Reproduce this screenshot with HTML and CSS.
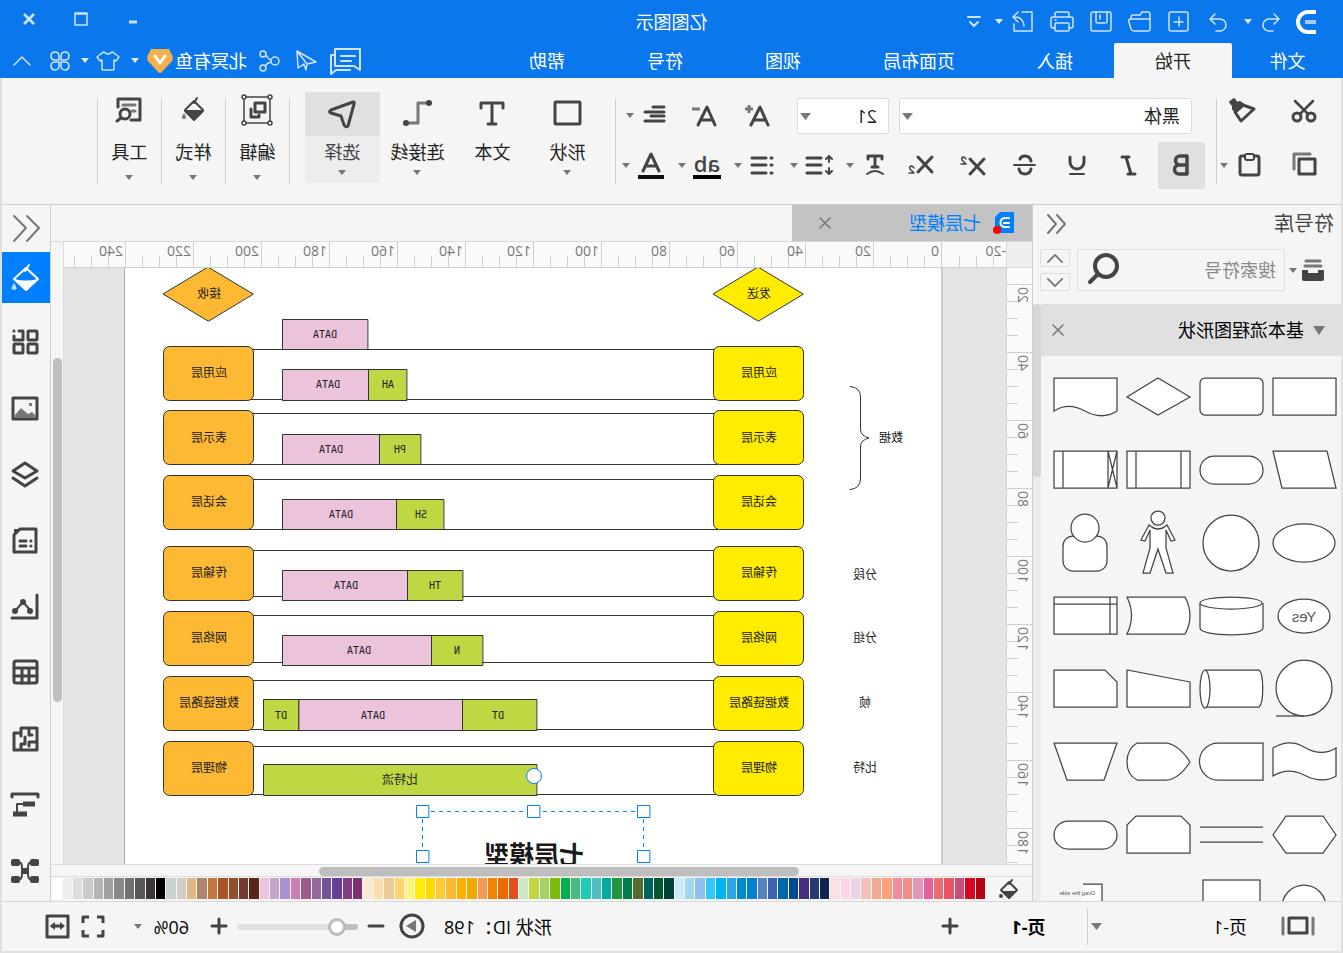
FILE: index.html
```html
<!DOCTYPE html>
<html lang="zh-CN">
<head>
<meta charset="utf-8">
<title>亿图图示</title>
<link rel="stylesheet" href="styles.css">
</head>
<body>
<div class="app">
  <header class="titlebar">
    <div class="quick">
      <svg class="logo" viewBox="0 0 24 26"><path d="M2 3H10A10 10 0 0 1 10 23H2" stroke="#fff" stroke-width="4" fill="none"/><path d="M2 13H13" stroke="#a9cdf8" stroke-width="4"/></svg>
      <button class="q-redo" aria-label="重做"><svg viewBox="0 0 24 24"><path d="M4 9H14A6 6 0 0 1 14 21H10M9 4L4 9L9 14"/></svg></button>
      <button class="q-caret" aria-label="更多"><svg class="caret" viewBox="0 0 8 5"><path d="M0 0H8L4 5Z"/></svg></button>
      <button class="q-btn" aria-label="撤销"><svg viewBox="0 0 24 24"><path d="M20 9H10A6 6 0 0 0 10 21H14M15 4L20 9L15 14"/></svg></button>
      <button class="q-btn" aria-label="新建"><svg viewBox="0 0 24 24"><rect x="3" y="2" width="19" height="19" rx="2"/><path d="M12 7V16M8 12H17"/></svg></button>
      <button class="q-btn" aria-label="打开"><svg viewBox="0 0 24 24"><path d="M2 19V5Q2 2 4 2H10L12 5H19Q21 5 21 8V9M4 9H21Q24 9 23 12L21 19Q20 21 18 21H4Q2 21 2 19V11Q2 9 4 9Z"/></svg></button>
      <button class="q-btn" aria-label="保存"><svg viewBox="0 0 24 24"><rect x="2" y="2" width="20" height="19" rx="2"/><path d="M6 2V12Q6 13 8 13H15Q17 13 17 12V2M13 5V9"/></svg></button>
      <button class="q-btn" aria-label="打印"><svg viewBox="0 0 24 24"><path d="M5 7V4Q5 2 7 2H17Q19 2 19 4V7M5 18H3Q1 18 1 16V9Q1 7 3 7H21Q23 7 23 9V16Q23 18 21 18H19M18 10H19"/><rect x="5" y="13" width="14" height="8" rx="1"/></svg></button>
      <button class="q-btn" aria-label="导出"><svg viewBox="0 0 24 24"><path d="M13 2H3V21H21V14M22 7Q12 6 11 16M17 2L22 7L17 12"/></svg></button>
      <button class="q-narrow" aria-label="更多导出"><svg class="caret" viewBox="0 0 8 5"><path d="M0 0H8L4 5Z"/></svg></button>
      <button class="q-btn" aria-label="自定义"><svg viewBox="0 0 24 24"><path d="M6 7H18M8 12L12 16L16 12" stroke-width="2"/></svg></button>
    </div>
    <div class="title">亿图图示</div>
    <div class="window-buttons">
      <button aria-label="最小化"><svg viewBox="0 0 24 24"><path d="M8 15H16" stroke-width="3" stroke-linecap="butt"/></svg></button>
      <button aria-label="最大化"><svg viewBox="0 0 24 24"><path d="M6 6H18V18H6ZM6 7H18"/></svg></button>
      <button aria-label="关闭"><svg viewBox="0 0 24 24"><path d="M7 7L17 17M17 7L7 17" stroke-width="2.500" stroke-linecap="butt"/></svg></button>
    </div>
  </header>

  <nav class="menubar">
    <button class="menu file">文件</button>
    <button class="menu active">开始</button>
    <button class="menu">插入</button>
    <button class="menu">页面布局</button>
    <button class="menu">视图</button>
    <button class="menu">符号</button>
    <button class="menu">帮助</button>
    <div class="account">
      <button class="w40" aria-label="评论"><svg class="s32" viewBox="0 0 32 32"><path d="M2 4H27V21H8L2 25ZM27 10H31V29L26 25H12M7 11H21M11 16H21" stroke-width="2"/></svg></button>
      <button class="w39" aria-label="发送"><svg viewBox="0 0 24 24"><path d="M21 2L2 13L11 15L12 21L14 15L20 19ZM21 2L11 15"/></svg></button>
      <button class="w36" aria-label="分享"><svg viewBox="0 0 24 24"><circle cx="6" cy="12" r="4"/><circle cx="18" cy="5" r="3"/><circle cx="18" cy="19" r="3"/><path d="M10 11Q13 10 15 6M10 13Q14 14 16 17"/></svg></button>
      <a class="user" href="#">北冥有鱼</a>
      <button class="w28" aria-label="会员"><svg class="vip" viewBox="0 0 28 26"><path d="M5 1H23L27 9L26 13L15 25H13L2 13L1 9Z" fill="#f3b04b" stroke="none"/><path d="M9 8L14 15L19 8" stroke="#fff" stroke-width="3"/></svg></button>
      <button class="w22" aria-label="会员菜单"><svg class="caret" viewBox="0 0 8 5"><path d="M0 0H8L4 5Z"/></svg></button>
      <button class="w32" aria-label="主题"><svg viewBox="0 0 24 24"><path d="M8 3Q12 7 16 3L18 4L23 8L20 12L18 11V20Q18 21 17 21H7Q6 21 6 20V11L4 12L1 8L6 4Z"/></svg></button>
      <button class="w14" aria-label="主题菜单"><svg class="caret" viewBox="0 0 8 5"><path d="M0 0H8L4 5Z"/></svg></button>
      <button class="w36" aria-label="应用"><svg viewBox="0 0 24 24"><path d="M11 11H6.500A4 4 0 1 1 11 6.500ZM13 11V6.500A4 4 0 1 1 17.500 11ZM11 13V17.500A4 4 0 1 1 6.500 13ZM13 13H17.500A4 4 0 1 1 13 17.500Z"/></svg></button>
      <button class="w40" aria-label="收起功能区"><svg viewBox="0 0 24 24"><path d="M4 16L12 8L20 16"/></svg></button>
    </div>
  </nav>

  <div class="frame">
    <section class="ribbon">
      <div class="clip-group">
        <div class="row clip-top">
          <button class="w40" aria-label="剪切"><svg class="s28" viewBox="0 0 28 28"><circle cx="7" cy="20" r="4" stroke-width="3"/><circle cx="21" cy="20" r="4" stroke-width="3"/><path d="M5 4L18 17M23 4L10 17" stroke-width="2.500"/></svg></button>
          <button class="w40" aria-label="格式刷"><svg class="s28" viewBox="0 0 28 28"><path d="M3 12L14 8L22 15L16 24Z" stroke-width="3"/><path d="M13 8L17 5L20 6L23 2L27 5L24 9L24 12L21 15Z" fill="#444"/></svg></button>
        </div>
        <div class="row clip-bottom">
          <button class="w40" aria-label="复制"><svg class="s28" viewBox="0 0 28 28"><path d="M24 18V3H8" stroke="#777" stroke-width="3"/><rect x="3" y="8" width="16" height="15" stroke-width="3"/></svg></button>
          <button class="w40" aria-label="粘贴"><svg class="s28" viewBox="0 0 28 28"><rect x="4" y="5" width="19" height="19" rx="2" stroke-width="3"/><rect x="9" y="3" width="9" height="6" rx="2" fill="#f5f5f5"/></svg></button>
          <button class="w10" aria-label="粘贴选项"><svg class="caret" viewBox="0 0 8 5"><path d="M0 0H8L4 5Z"/></svg></button>
        </div>
      </div>
      <span class="divider"></span>
      <div class="font-group">
        <div class="row font-top">
          <label class="combo family"><select aria-label="字体"><option>黑体</option></select><svg class="caret big" viewBox="0 0 8 5"><path d="M0 0H8L4 5Z"/></svg></label>
          <label class="combo size"><select aria-label="字号"><option>21</option></select><svg class="caret big" viewBox="0 0 8 5"><path d="M0 0H8L4 5Z"/></svg></label>
          <button class="w53" aria-label="增大字号"><svg class="s28" viewBox="0 0 28 28"><path d="M3 24L11 6L20 24M6 19H17" stroke-width="3"/><path d="M18 8H26M22 4V12" stroke="#777" stroke-width="3" stroke-linecap="butt"/></svg></button>
          <button class="w53" aria-label="减小字号"><svg class="s28" viewBox="0 0 28 28"><path d="M3 24L11 6L20 24M6 19H17" stroke-width="3"/><path d="M18 8H26" stroke="#777" stroke-width="3" stroke-linecap="butt"/></svg></button>
          <button class="unit first" aria-label="对齐"><svg class="s28" viewBox="0 0 28 28"><path d="M5 6H16M5 11H24M5 15H18M5 20H24" stroke-width="3"/></svg><svg class="caret" viewBox="0 0 8 5"><path d="M0 0H8L4 5Z"/></svg></button>
        </div>
        <div class="row font-bottom">
          <button class="bold" aria-label="加粗"><svg class="s28" viewBox="0 0 28 28"><path d="M8 5H15A4.500 4.500 0 0 1 15 14H8M15 14H16A4.500 4.500 0 0 1 16 23H8V5" stroke-width="3.500"/></svg></button>
          <button class="w52" aria-label="斜体"><svg class="s28" viewBox="0 0 28 28"><path d="M14 6H21M8 23H15M17 6L12 23" stroke-width="3"/></svg></button>
          <button class="w52" aria-label="下划线"><svg class="s28" viewBox="0 0 28 28"><path d="M7 6V11A7 7 0 0 0 21 11V6" stroke-width="3"/><path d="M7 23H21" stroke-width="2"/></svg></button>
          <button class="w52" aria-label="删除线"><svg class="s28" viewBox="0 0 28 28"><path d="M19 8Q18 5 14 5Q9 5 8 10M8 18Q9 23 14 23Q19 23 20 18" stroke-width="3"/><path d="M4 14H25" stroke-width="2"/></svg></button>
          <button class="w52" aria-label="上标"><svg class="s28" viewBox="0 0 28 28"><path d="M3 8L17 23M17 8L3 23" stroke-width="3"/><path d="M21 8Q22 6 24 6Q26 7 25 9L21 13H26" stroke-width="1.500"/></svg></button>
          <button class="w52" aria-label="下标"><svg class="s28" viewBox="0 0 28 28"><path d="M3 6L17 21M17 6L3 21" stroke-width="3"/><path d="M21 17Q22 15 24 15Q26 16 25 18L21 22H26" stroke-width="1.500"/></svg></button>
          <button class="unit text-style" aria-label="文本样式"><svg class="s28" viewBox="0 0 28 28"><path d="M7 8V5H21V8M14 5V16M11 16H17" stroke-width="3"/><path d="M6 23Q14 17 22 23" stroke-width="2"/></svg><svg class="caret" viewBox="0 0 8 5"><path d="M0 0H8L4 5Z"/></svg></button>
          <button class="unit" aria-label="行距"><svg class="s28" viewBox="0 0 28 28"><path d="M12 7H26M12 14H26M12 22H26" stroke-width="3"/><path d="M4 11V5M1 8L4 5L7 8M4 17V23M1 20L4 23L7 20" stroke-width="2"/></svg><svg class="caret" viewBox="0 0 8 5"><path d="M0 0H8L4 5Z"/></svg></button>
          <button class="unit" aria-label="列表"><svg class="s28" viewBox="0 0 28 28"><path d="M11 7H25M11 14H25M11 22H25M5 7H6M5 14H6M5 22H6" stroke-width="3"/></svg><svg class="caret" viewBox="0 0 8 5"><path d="M0 0H8L4 5Z"/></svg></button>
          <button class="unit" aria-label="突出显示"><span class="mark">ab</span><svg class="caret" viewBox="0 0 8 5"><path d="M0 0H8L4 5Z"/></svg></button>
          <button class="unit" aria-label="字体颜色"><svg class="s28" viewBox="0 0 28 28"><path d="M6 20L14 3L22 20M9 15H19" stroke-width="3"/><path d="M1 26H27" stroke="#111" stroke-width="4" stroke-linecap="butt"/></svg><svg class="caret" viewBox="0 0 8 5"><path d="M0 0H8L4 5Z"/></svg></button>
        </div>
      </div>
      <span class="divider"></span>
      <div class="tools">
        <button class="tool"><span class="pic"><svg class="s32" viewBox="0 0 32 32"><rect x="3" y="4" width="25" height="22" rx="1" stroke-width="3"/></svg></span><span class="lbl">形状</span><svg class="caret" viewBox="0 0 8 5"><path d="M0 0H8L4 5Z"/></svg></button>
        <button class="tool"><span class="pic"><svg class="s32" viewBox="0 0 32 32"><path d="M5 10V5H27V10M16 5V26M12 26H20" stroke-width="3"/></svg></span><span class="lbl">文本</span></button>
        <button class="tool"><span class="pic"><svg class="s32" viewBox="0 0 32 32"><path d="M6 5H15V25H24" stroke="#777" stroke-width="3"/><circle cx="4" cy="5" r="3" fill="#444" stroke="none"/><circle cx="27" cy="25" r="3" fill="#444" stroke="none"/></svg></span><span class="lbl">连接线</span><svg class="caret" viewBox="0 0 8 5"><path d="M0 0H8L4 5Z"/></svg></button>
        <button class="tool selected"><span class="pic"><svg class="s32" viewBox="0 0 32 32"><path d="M5 4L27 12Q30 14 27 15L17 18L14 27Q12 30 10 28L4 6Q3 4 5 4Z" stroke-width="3"/></svg></span><span class="lbl">选择</span><svg class="caret" viewBox="0 0 8 5"><path d="M0 0H8L4 5Z"/></svg></button>
      </div>
      <span class="divider wide"></span>
      <button class="tool slim"><span class="pic"><svg class="s32" viewBox="0 0 32 32"><path d="M3 3H29V29H3Z" stroke-width="1.500"/><rect x="8" y="9" width="10" height="9" stroke-width="3"/><path d="M22 15V23H14V21" stroke-width="3"/><g fill="#f5f5f5" stroke-width="1.500"><circle cx="3" cy="3" r="2"/><circle cx="29" cy="3" r="2"/><circle cx="3" cy="29" r="2"/><circle cx="29" cy="29" r="2"/></g></svg></span><span class="lbl">编辑</span><svg class="caret" viewBox="0 0 8 5"><path d="M0 0H8L4 5Z"/></svg></button>
      <span class="divider"></span>
      <button class="tool slim"><span class="pic"><svg class="s32" viewBox="0 0 32 32"><path d="M12 4L15 9M15 7L6 16L15 25L24 16Z" stroke-width="2"/><path d="M6 17H24L15 26Z" fill="#444"/><path d="M25 19Q29 25 25 25T25 19Z" fill="#777" stroke="none"/></svg></span><span class="lbl">样式</span><svg class="caret" viewBox="0 0 8 5"><path d="M0 0H8L4 5Z"/></svg></button>
      <span class="divider"></span>
      <button class="tool slim"><span class="pic"><svg class="s32" viewBox="0 0 32 32"><path d="M27 13V5H5V26H14" stroke-width="3"/><path d="M10 11H22M10 17H13" stroke="#777" stroke-width="3"/><circle cx="20" cy="20" r="5" stroke-width="3"/><path d="M24 24L28 27" stroke-width="3"/></svg></span><span class="lbl">工具</span><svg class="caret" viewBox="0 0 8 5"><path d="M0 0H8L4 5Z"/></svg></button>
      <span class="divider"></span>
    </section>

    <main class="workspace">
      <aside class="library">
        <div class="lib-head"><h2>符号库</h2><button aria-label="折叠符号库"><svg viewBox="0 0 24 24"><path d="M12 3L4 12L12 21M21 3L13 12L21 21" stroke="#777" stroke-width="2"/></svg></button></div>
        <div class="lib-search">
          <button class="archive" aria-label="库管理"><svg viewBox="0 0 24 24"><path d="M5 3H19M4 8H20" stroke="#777" stroke-width="3"/><path d="M1 12H7V15H17V12H23V21Q23 23 21 23H3Q1 23 1 21Z" fill="#444" stroke="none"/></svg><svg class="caret" viewBox="0 0 8 5"><path d="M0 0H8L4 5Z"/></svg></button>
          <div class="search-box"><input type="text" placeholder="搜索符号" aria-label="搜索符号"><button aria-label="搜索"><svg class="s36" viewBox="0 0 36 36"><circle cx="16" cy="14" r="11" stroke-width="4"/><path d="M24 22L32 30" stroke-width="4"/></svg></button></div>
          <div class="steps"><button aria-label="上一个"><svg class="step" viewBox="0 0 18 10"><path d="M1 9L9 1L17 9"/></svg></button><button aria-label="下一个"><svg class="step" viewBox="0 0 18 10"><path d="M1 1L9 9L17 1"/></svg></button></div>
        </div>
        <div class="lib-body">
          <div class="lib-scroll">
            <div class="section-head"><svg class="tri" viewBox="0 0 12 9"><path d="M0 0H12L6 9Z"/></svg><h3>基本流程图形状</h3><button aria-label="关闭"><svg class="s12" viewBox="0 0 12 12"><path d="M1 1L11 11M11 1L1 11"/></svg></button></div>
            <div class="shapes">
              <svg viewBox="0 0 73 73"><path d="M5 18H68V55H5Z"/></svg>
              <svg viewBox="0 0 73 73"><rect x="5" y="18" width="63" height="37" rx="5"/></svg>
              <svg viewBox="0 0 73 73"><path d="M5 37L37 18L68 37L37 55Z"/></svg>
              <svg viewBox="0 0 73 73"><path d="M5 18H68V51C57 44 46 46 37 51S16 58 5 51Z"/></svg>
              <svg viewBox="0 0 73 73"><path d="M14 18H68L59 55H5Z"/></svg>
              <svg viewBox="0 0 73 73"><rect x="5" y="23" width="63" height="28" rx="14"/></svg>
              <svg viewBox="0 0 73 73"><path d="M5 18H68V55H5ZM14 18V55M59 18V55"/></svg>
              <svg viewBox="0 0 73 73"><path d="M5 18H68V55H5ZM14 18V55M59 18V55M5 18L14 55M14 18L5 55"/></svg>
              <svg viewBox="0 0 73 73"><ellipse cx="37" cy="37" rx="31" ry="19"/></svg>
              <svg viewBox="0 0 73 73"><circle cx="37" cy="37" r="28"/></svg>
              <svg viewBox="0 0 73 73"><circle cx="37" cy="12" r="7"/><path d="M28 19Q37 27 46 19L54 34L50 35L45 24V42L52 67H45L37 43L29 67H22L29 42V24L24 35L20 34Z"/></svg>
              <svg viewBox="0 0 73 73"><rect x="15" y="30" width="44" height="35" rx="10"/><circle cx="37" cy="22" r="14"/></svg>
              <svg viewBox="0 0 73 73"><ellipse cx="37" cy="37" rx="26" ry="17"/><text x="37" y="43" class="yes">Yes</text></svg>
              <svg viewBox="0 0 73 73"><path d="M5 24V49C5 58 68 58 68 49V24"/><ellipse cx="37" cy="24" rx="31" ry="6"/></svg>
              <svg viewBox="0 0 73 73"><path d="M10 18H68Q59 37 68 55H10Q0 37 10 18Z"/></svg>
              <svg viewBox="0 0 73 73"><path d="M5 18H68V55H5ZM12 18V55M5 25H68"/></svg>
              <svg viewBox="0 0 73 73"><circle cx="37" cy="36" r="28"/><path d="M37 64H65"/></svg>
              <svg viewBox="0 0 73 73"><path d="M63 18H9C4 22 4 51 9 55H63"/><ellipse cx="63" cy="37" rx="5" ry="19"/></svg>
              <svg viewBox="0 0 73 73"><path d="M5 30L68 18V55H5Z"/></svg>
              <svg viewBox="0 0 73 73"><path d="M17 18H68V55H5V30Z"/></svg>
              <svg viewBox="0 0 73 73"><path d="M5 23C16 30 27 28 37 22S58 17 68 23V51C58 45 47 45 37 50S16 58 5 51Z"/></svg>
              <svg viewBox="0 0 73 73"><path d="M5 18H50A18 18 0 0 1 50 55H5Z"/></svg>
              <svg viewBox="0 0 73 73"><path d="M5 37Q16 20 28 18H58Q68 24 68 37T58 55H28Q16 54 5 37Z"/></svg>
              <svg viewBox="0 0 73 73"><path d="M5 18H68L55 55H18Z"/></svg>
              <svg viewBox="0 0 73 73"><path d="M5 37L18 18H55L68 37L55 55H18Z"/></svg>
              <svg viewBox="0 0 73 73"><path d="M5 29H68M5 44H68"/></svg>
              <svg viewBox="0 0 73 73"><path d="M14 18H59L68 27V55H5V27Z"/></svg>
              <svg viewBox="0 0 73 73"><rect x="5" y="23" width="63" height="28" rx="14"/></svg>
              <svg viewBox="0 0 73 73"><circle cx="37" cy="36" r="22"/></svg>
              <svg viewBox="0 0 73 73"><rect x="8" y="9" width="57" height="57"/></svg>
              <svg viewBox="0 0 73 73"></svg>
              <svg viewBox="0 0 73 73"><path d="M39 13H20V60H39"/><text x="27" y="24" class="tiny">Drag the side</text></svg>
            </div>
          </div>
          <div class="lib-track"><span class="lib-thumb"></span></div>
        </div>
      </aside>

      <section class="center">
        <div class="doc-tabs">
          <div class="doc-tab">
            <svg class="doc-icon" viewBox="0 0 22 24"><path d="M1 1H15L20 6V22H1Z" fill="#007fff" stroke="none"/><path d="M6 7H10A4 4 0 0 1 10 16H6M6 12H11" stroke="#fff" stroke-width="2"/><circle cx="18" cy="19" r="4" fill="#f00" stroke="none"/></svg>
            <button class="doc-name">七层模型</button>
            <button class="doc-close" aria-label="关闭文档"><svg class="s12" viewBox="0 0 12 12"><path d="M1 1L11 11M11 1L1 11"/></svg></button>
          </div>
        </div>
        <div class="ruler-row">
          <div class="corner"></div>
          <div class="h-ruler"><span class="neg">-20</span><span>0</span><span>20</span><span>40</span><span>60</span><span>80</span><span>100</span><span>120</span><span>140</span><span>160</span><span>180</span><span>200</span><span>220</span><span>240</span></div>
          <div class="track-gap"></div>
        </div>
        <div class="canvas-row">
          <div class="v-ruler"><span>20</span><span>40</span><span>60</span><span>80</span><span>100</span><span>120</span><span>140</span><span>160</span><span>180</span></div>
          <div class="canvas">
            <svg class="diagram" viewBox="337 268 942 596">
              <rect x="401.500" y="200" width="817" height="900" class="page"/>
              <g class="flow">
                <path fill="none" d="M625 349.500H1095M625 399.500H1095M625 413.500H1095M625 464.500H1095M625 479.500H1095M625 529.500H1095M625 550.500H1095M625 596.500H1095M625 615.500H1095M625 662.500H1095M625 680.500H1095M625 729.500H1095M625 746.500H1095M625 794.500H1095"/>
                <g fill="#ffec00">
                  <path d="M540 294L585 267L630 294L585 321Z"/>
                  <rect x="539.500" y="346.500" width="90" height="54" rx="6"/><rect x="539.500" y="410.500" width="90" height="54" rx="6"/><rect x="539.500" y="475.500" width="90" height="54" rx="6"/><rect x="539.500" y="546.500" width="90" height="54" rx="6"/><rect x="539.500" y="611.500" width="90" height="54" rx="6"/><rect x="539.500" y="676.500" width="90" height="54" rx="6"/><rect x="539.500" y="741.500" width="90" height="54" rx="6"/>
                </g>
                <g fill="#fdb933">
                  <path d="M1090 294L1135 267L1180 294L1135 321Z"/>
                  <rect x="1089.500" y="346.500" width="90" height="54" rx="6"/><rect x="1089.500" y="410.500" width="90" height="54" rx="6"/><rect x="1089.500" y="475.500" width="90" height="54" rx="6"/><rect x="1089.500" y="546.500" width="90" height="54" rx="6"/><rect x="1089.500" y="611.500" width="90" height="54" rx="6"/><rect x="1089.500" y="676.500" width="90" height="54" rx="6"/><rect x="1089.500" y="741.500" width="90" height="54" rx="6"/>
                </g>
                <g fill="#ebc3db">
                  <rect x="975.500" y="319.500" width="85" height="30"/><rect x="974.500" y="369.500" width="86" height="31"/><rect x="963.500" y="434.500" width="97" height="30"/><rect x="946.500" y="499.500" width="114" height="30"/><rect x="935.500" y="570.500" width="125" height="30"/><rect x="911.500" y="635.500" width="149" height="30"/><rect x="880.500" y="699.500" width="164" height="31"/>
                </g>
                <g fill="#bed742">
                  <rect x="936.500" y="369.500" width="38" height="31"/><rect x="922.500" y="434.500" width="41" height="30"/><rect x="899.500" y="499.500" width="47" height="30"/><rect x="880.500" y="570.500" width="55" height="30"/><rect x="860.500" y="635.500" width="51" height="30"/><rect x="806.500" y="699.500" width="74" height="31"/><rect x="1044.500" y="699.500" width="35" height="31"/><rect x="806.500" y="764.500" width="273" height="31"/>
                </g>
                <path fill="none" d="M493 386.500Q482.500 387 482.500 397V430Q482 436 474 438Q482 440 482.500 446V479Q483 489 493 489.500"/>
              </g>
              <g class="node-text">
                <text x="584" y="298">发送</text><text x="584" y="377">应用层</text><text x="584" y="442">表示层</text><text x="584" y="506">会话层</text><text x="584" y="577">传输层</text><text x="584" y="642">网络层</text><text x="584" y="707">数据链路层</text><text x="584" y="772">物理层</text>
                <text x="1134" y="298">接收</text><text x="1134" y="377">应用层</text><text x="1134" y="442">表示层</text><text x="1134" y="506">会话层</text><text x="1134" y="577">传输层</text><text x="1134" y="642">网络层</text><text x="1134" y="707">数据链路层</text><text x="1134" y="772">物理层</text>
                <text x="452" y="442">数据</text><text x="478" y="579">分段</text><text x="478" y="642">分组</text><text x="478" y="707">帧</text><text x="478" y="772">比特</text><text x="943" y="784">比特流</text>
              </g>
              <g class="node-text latin">
                <text x="1018" y="338">DATA</text><text x="1015" y="388">DATA</text><text x="955" y="388">AH</text><text x="1012" y="453">DATA</text><text x="943" y="453">PH</text><text x="1002" y="518">DATA</text><text x="922" y="518">SH</text><text x="997" y="589">DATA</text><text x="908" y="589">TH</text><text x="984" y="654">DATA</text><text x="886" y="654">N</text><text x="970" y="719">DATA</text><text x="845" y="719">DT</text><text x="1062" y="719">DT</text>
              </g>
              <text x="809" y="864" class="big-title">七层模型</text>
              <path class="dash" d="M700 811.500H921M699.500 811V900M920.500 811V900"/>
              <g class="handles"><rect x="693.500" y="805.500" width="12" height="12"/><rect x="803.500" y="805.500" width="12" height="12"/><rect x="914.500" y="805.500" width="12" height="12"/><rect x="693.500" y="850.500" width="12" height="12"/><rect x="914.500" y="850.500" width="12" height="12"/><circle cx="809" cy="776" r="7.500"/></g>
            </svg>
          </div>
          <div class="v-track"><span class="v-thumb"></span></div>
        </div>
        <div class="h-track"><span class="h-thumb"></span></div>
        <div class="palette">
          <button class="fill" aria-label="填充颜色"><svg viewBox="0 0 24 24"><path d="M9 3L12 7M12 5L4 13L12 21L20 13Z" stroke-width="2"/><path d="M4 14H20L12 22Z" fill="#444" stroke="none"/><circle cx="20" cy="19" r="2" fill="#444" stroke="none"/></svg></button>
          <div class="swatches" id="swatches"></div>
        </div>
      </section>

      <aside class="side">
        <button class="collapse" aria-label="收起面板"><svg class="s32" viewBox="0 0 32 32"><path d="M15 3L3 15L15 28M28 3L16 15L28 28" stroke="#777" stroke-width="2"/></svg></button>
        <button class="on" aria-label="填充"><svg class="s32" viewBox="0 0 32 32"><path d="M13 3L17 9M16 6L4 17L16 28L28 17Z" stroke="#fff" stroke-width="2"/><path d="M4 17Q16 20 28 17L16 29Z" fill="#fff" stroke="none"/><path d="M28 21Q33 28 28 28T28 21Z" fill="#b8dcff" stroke="none"/></svg></button>
        <button class="gap" aria-label="组件"><svg class="s32" viewBox="0 0 32 32"><g stroke-width="3"><rect x="5" y="5" width="9" height="9" rx="1"/><rect x="5" y="18" width="9" height="9" rx="1"/><rect x="19" y="18" width="9" height="9" rx="1"/><path d="M23 5H19V14H28V10M28 5H28.100"/></g></svg></button>
        <button aria-label="图片"><svg class="s32" viewBox="0 0 32 32"><rect x="5" y="6" width="24" height="21" stroke-width="3"/><path d="M6 24L10 20L14 22L21 16L27 23V26H6Z" fill="#777" stroke="none"/><rect x="10" y="11" width="3" height="3" fill="#777" stroke="none"/></svg></button>
        <button aria-label="图层"><svg class="s32" viewBox="0 0 32 32"><path d="M17 5L29 13L17 20L5 13ZM5 20L17 28L29 20" stroke-width="3"/></svg></button>
        <button aria-label="备注"><svg class="s32" viewBox="0 0 32 32"><path d="M6 5H22L28 11V28H6Z" stroke-width="3"/><path d="M21 5L28 12V5Z" fill="#444" stroke="none"/><path d="M11 17H11.100M16 17H22M11 22H11.100M16 22H22" stroke-width="3"/></svg></button>
        <button aria-label="图表"><svg class="s32" viewBox="0 0 32 32"><path d="M5 5V28H30" stroke-width="3"/><path d="M11 21L19 12L27 21" stroke-width="2"/><g fill="#444" stroke="none"><circle cx="12" cy="21" r="3"/><circle cx="19" cy="12" r="3"/><circle cx="27" cy="21" r="3"/></g></svg></button>
        <button aria-label="表格"><svg class="s32" viewBox="0 0 32 32"><rect x="5" y="5" width="23" height="22" rx="2" stroke-width="3"/><path d="M5 12H28M5 20H28M13 12V27M20 12V27" stroke-width="3"/></svg></button>
        <button aria-label="平面图"><svg class="s32" viewBox="0 0 32 32"><path d="M5 6H21V11H28V28H5ZM13 6V13H10M5 20H13V24M21 11V14M21 28V22H17V15" stroke-width="3"/></svg></button>
        <button aria-label="甘特图"><svg class="s32" viewBox="0 0 32 32"><path d="M4 9V6H30V9" stroke-width="3"/><path d="M7 16H19M15 26H29" stroke-width="5" stroke-linecap="butt"/><path d="M19 16H25V25" stroke-width="2"/></svg></button>
        <button aria-label="思维导图"><svg class="s32" viewBox="0 0 32 32"><g fill="#444" stroke="none"><rect x="3" y="5" width="9" height="7" rx="2"/><rect x="22" y="5" width="9" height="7" rx="2"/><rect x="3" y="22" width="9" height="7" rx="2"/><rect x="22" y="22" width="9" height="7" rx="2"/><rect x="13" y="14" width="8" height="6" rx="2"/></g><path d="M10 8Q14 8 14 13V20Q14 26 10 26M24 8Q20 8 20 13V20Q20 26 24 26" stroke-width="2"/></svg></button>
      </aside>
    </main>

    <footer class="status">
      <div class="pages">
        <button class="view" aria-label="页面视图"><svg class="s36" viewBox="0 0 36 36"><rect x="9" y="9" width="18" height="15" stroke-width="3"/><path d="M3 9V25M33 9V25" stroke="#777" stroke-width="3"/></svg></button>
        <button class="page-select"><span>页-1</span><svg class="caret big" viewBox="0 0 8 5"><path d="M0 0H8L4 5Z"/></svg></button>
        <button class="page-tab">页-1</button>
        <button class="w40" aria-label="添加页面"><svg viewBox="0 0 24 24"><path d="M12 4V18M5 11H19" stroke-width="3"/></svg></button>
      </div>
      <div class="zoom">
        <span class="shape-id">形状 ID：198</span>
        <button class="w36" aria-label="播放"><svg class="s28" viewBox="0 0 28 28"><circle cx="14" cy="13" r="11" stroke-width="3"/><path d="M10 7L20 13L10 19Z" fill="#777" stroke="none"/></svg></button>
        <button class="w36" aria-label="缩小"><svg viewBox="0 0 24 24"><path d="M5 11H19" stroke-width="3"/></svg></button>
        <input type="range" min="0" max="100" value="12" aria-label="缩放">
        <button class="w36" aria-label="放大"><svg viewBox="0 0 24 24"><path d="M12 4V18M5 11H19" stroke-width="3"/></svg></button>
        <button class="percent"><span>60%</span><svg class="caret" viewBox="0 0 8 5"><path d="M0 0H8L4 5Z"/></svg></button>
        <button class="w36" aria-label="全屏"><svg class="s28" viewBox="0 0 28 28"><path d="M4 10V4H10M18 4H24V10M24 17V23H18M10 23H4V17" stroke-width="3" stroke-linecap="butt"/></svg></button>
        <button class="w36" aria-label="适应宽度"><svg class="s28" viewBox="0 0 28 28"><rect x="3" y="3" width="21" height="21" stroke-width="3"/><path d="M9 13H19" stroke-width="3"/><path d="M6 13L11 9V17ZM21 13L16 9V17Z" fill="#444" stroke="none"/></svg></button>
      </div>
    </footer>
  </div>
</div>
<script src="palette.js"></script>
</body>
</html>
```
FILE: palette.js
```js
const colors = ("b60414 d9061d c94e78 e95464 ed6b73 e85f9f e297b7 f08f88 f18d9b ffa07a efaa92 f6bfbc e9d5e7 ffd5e5 fde0e4 " +
  "0f2350 223a70 432f7d 07498f 0068a9 3f62ae 5482c2 0080cf 008bcf 2ba7e2 00b4f0 31c9fa 8bc1ea a0d8ef ceeaf7 " +
  "004235 005931 00625f 556b2f 007e47 1f963f 00ada0 4fbec3 1acdb3 48bb7f 00b04f 7ebb10 a4d064 bed742 cee7ca " +
  "e24e1c ec6a00 f28500 f39a56 f3a800 ffb000 fdb933 fbca32 ffd900 ffec00 fdf383 fdd470 eacc95 ffdcab fce8d0 " +
  "7a3171 853d80 663f95 745399 96689e 9e5a88 cc7eb1 a992cf c6a5cb ebc3db " +
  "592618 753a30 944f2a a85428 c1773e b3836b deb887 d5cbc6 c9d3cb " +
  "000000 3e3636 595757 727171 898989 9fa0a0 b4b5b5 c9cccb dcdddd efefef ffffff").split(" ");
const box = document.getElementById("swatches");
for (const c of colors) {
  const b = document.createElement("button");
  b.style.background = "#" + c;
  b.setAttribute("aria-label", "#" + c);
  box.append(b);
}
```
FILE: styles.css
```css
* { box-sizing: border-box; }
body { margin: 0; overflow: hidden; font: 18px/24px "Open Sans", "Noto Sans CJK SC", sans-serif; color: #222; }
button, input, select { font: inherit; color: inherit; background: none; border: 0; padding: 0; margin: 0; }
button { display: flex; align-items: center; justify-content: center; flex: none; }
h2, h3 { margin: 0; font-weight: 400; }
svg { display: block; flex: none; width: 24px; height: 24px; fill: none; stroke: #444; stroke-width: 2; stroke-linejoin: round; stroke-linecap: round; }
.s12 { width: 12px; height: 12px; stroke: #777; stroke-width: 1.5px; }
.s28 { width: 28px; height: 28px; }
.s32 { width: 32px; height: 32px; }
.s36 { width: 36px; height: 36px; }
.caret { width: 8px; height: 5px; fill: #777; stroke: none; }
.caret.big { width: 11px; height: 7px; }
.w10 { width: 10px; } .w14 { width: 14px; } .w22 { width: 22px; } .w28 { width: 28px; }
.w32 { width: 32px; } .w36 { width: 36px; } .w39 { width: 39px; } .w40 { width: 40px; }
.w52 { width: 52px; } .w53 { width: 53px; }

/* The whole interface is shown mirrored. */
.app { height: 100vh; display: flex; flex-direction: column; transform: scaleX(-1); background: #f5f5f5; }

.titlebar { flex: none; height: 43px; display: grid; grid-template-columns: 1fr auto 1fr; background: #0a77ec; color: #fff; }
.titlebar svg, .menubar svg { stroke: #cfe3fc; stroke-width: 1.5px; }
.titlebar .caret, .menubar .caret { fill: #dcebfd; stroke: none; }
.quick { display: flex; align-items: center; padding-left: 25px; }
.quick .logo { width: 24px; height: 26px; stroke-linecap: butt; }
.quick button { height: 40px; }
.q-redo { width: 24px; margin-left: 11px; }
.q-caret { width: 21px; }
.q-btn { width: 39px; }
.q-narrow { width: 10px; }
.title { padding-top: 10px; }
.window-buttons { display: flex; justify-content: flex-end; padding-right: 3px; }
.window-buttons button { width: 52px; height: 38px; }

.menubar { flex: none; height: 35px; display: flex; background: #0a77ec; }
.menu { padding: 0 41px; color: #fff; }
.menu.file { width: 111px; padding: 0; }
.menu.active { background: #f5f5f5; color: #222; border-radius: 2px 2px 0 0; }
.account { display: flex; align-items: center; margin-left: auto; padding-right: 2px; }
.user { color: #fff; text-decoration: none; margin-left: 4px; margin-right: 1px; white-space: nowrap; }
.vip { width: 28px; height: 26px; }

.frame { flex: 1; min-height: 0; display: flex; flex-direction: column; border: 2px solid #e0e0e0; border-top: 0; }
.ribbon { flex: none; display: flex; padding: 6px 0 12px; border-bottom: 1px solid #d0d0d0; }
.row { display: flex; align-items: center; height: 54px; }
.divider { width: 1px; margin: 15px 0 8px; background: #ccc; }
.divider.wide { margin-left: 15px; }
.clip-group { width: 124px; padding-left: 17px; }
.clip-top { gap: 21px; }
.clip-bottom .w40 + .w40 { margin-left: 15px; }
.font-top { padding-left: 24px; }
.font-bottom { padding-left: 11px; }
.font-group { padding-right: 6px; }
.combo { position: relative; height: 36px; margin-top: 10px; margin-right: 10px; background: #fff; border: 1px solid #ddd; border-radius: 2px; }
.combo.size { margin-right: 13px; }
.combo select { appearance: none; width: 100%; height: 100%; padding-left: 11px; outline: none; }
.combo .caret { position: absolute; right: 2px; top: 14px; }
.family { width: 293px; }
.size { width: 92px; }
.font-top button { padding-top: 8px; }
.unit { width: 43px; justify-content: space-between; margin-left: 13px; }
.unit.first { margin-left: 9px; }
.unit.text-style { margin-left: 6px; }
.bold { width: 47px; height: 47px; margin-right: 3px; background: #e0e0e0; border-radius: 2px; }
.mark { width: 28px; border-bottom: 4px solid #000; color: #444; font: 600 22px/24px "Open Sans", sans-serif; text-align: center; }
.tools { display: flex; padding-left: 10px; }
.tool { width: 75px; height: 91px; margin-top: 8px; flex-direction: column; justify-content: flex-start; border-radius: 2px; }
.tool .pic { width: 100%; height: 44px; display: flex; align-items: center; justify-content: center; }
.tool .lbl { margin: 4px 0 6px; }
.tool.selected { background: #ededed; color: #444; }
.tool.selected .pic { background: #e0e0e0; }
.tool.slim { width: 63px; }
.tool.slim .pic { height: 36px; }
.tool.slim .lbl { margin: 12px 0 11px; }

.workspace { flex: 1; min-height: 0; display: flex; }

.library { flex: none; width: 309px; display: flex; flex-direction: column; border-right: 1px solid #ccc; }
.lib-head { flex: none; height: 38px; display: flex; align-items: center; justify-content: space-between; padding: 0 12px 0 7px; }
.lib-head h2 { font-size: 20px; color: #444; }
.lib-search { flex: none; display: flex; height: 42px; margin: 6px 7px 13px 16px; }
.archive { width: 40px; justify-content: flex-start; gap: 4px; }
.search-box { flex: 1; min-width: 0; display: flex; align-items: center; border: 1px solid #ddd; border-radius: 2px; }
.search-box input { flex: 1; min-width: 0; height: 40px; padding-left: 8px; outline: none; }
.search-box input::placeholder { color: #888; opacity: 1; }
.search-box button { width: 52px; }
.steps { width: 30px; margin-left: 7px; display: grid; gap: 6px; }
.steps button { border: 1px solid #ddd; border-radius: 2px; }
.step { width: 16px; height: 9px; stroke: #777; }
.lib-body { flex: 1; min-height: 0; display: flex; }
.lib-scroll { flex: 1; overflow: hidden; }
.section-head { display: flex; align-items: center; height: 52px; padding: 0 11px 0 16px; background: #e0e0e0; }
.tri { width: 12px; height: 9px; fill: #777; stroke: none; }
.section-head h3 { flex: 1; margin-left: 9px; font-size: 18px; color: #000; }
.shapes { display: grid; grid-template-columns: repeat(4, 73px); padding-top: 4px; }
.shapes svg { width: 73px; height: 73px; fill: #fff; stroke: #444; stroke-width: 1.25px; stroke-linejoin: miter; stroke-linecap: butt; }
.shapes text { fill: #555; stroke: none; }
.yes { font: 15px "Liberation Sans", sans-serif; text-anchor: middle; }
.tiny { font: 6px "Liberation Sans", sans-serif; }
.lib-track { width: 8px; background: #ececec; }
.lib-thumb { display: block; height: 29%; border-radius: 4px; background: #d6d6d6; }

.center { flex: 1; min-width: 0; display: flex; flex-direction: column; }
.doc-tabs { flex: none; height: 37px; border-bottom: 1px solid #d8d8d8; }
.doc-tab { width: 240px; height: 36px; display: flex; align-items: center; padding: 0 27px 0 17px; background: #c3c3c3; }
.doc-icon { width: 22px; height: 24px; }
.doc-name { margin-left: 12px; color: #007fff; }
.doc-close { margin-left: auto; }
.ruler-row { flex: none; height: 26px; display: flex; }
.corner { flex: none; width: 26px; background: #efefef; border-right: 1px solid #d8d8d8; border-bottom: 1px solid #d8d8d8; }
.h-ruler { flex: 1; min-width: 0; display: flex; overflow: hidden; background: #fafafa; border-bottom: 1px solid #d0d0d0; font-size: 14px; line-height: 18px; color: #777; }
.h-ruler span { flex: none; width: 68px; padding-left: 2px; border-left: 1px solid #d0d0d0; background: repeating-linear-gradient(90deg, transparent 0 16px, #d0d0d0 16px 17px) left bottom / 100% 11px no-repeat; }
.h-ruler .neg { width: 64px; padding-left: 0; border-left: 0; background-position: -4px bottom; }
.track-gap { flex: none; width: 13px; border-left: 1px solid #ddd; }
.canvas-row { flex: 1; min-height: 0; display: flex; }
.v-ruler { flex: none; width: 26px; padding-top: 16px; overflow: hidden; background: repeating-linear-gradient(180deg, #d0d0d0 0 1px, transparent 1px 17px) right -1px / 11px 100% no-repeat #fafafa; border-right: 1px solid #d0d0d0; font-size: 14px; line-height: 18px; color: #777; }
.v-ruler span { display: flex; justify-content: flex-end; height: 68px; padding-bottom: 2px; writing-mode: vertical-rl; transform: rotate(180deg); border-bottom: 1px solid #d0d0d0; }
.canvas { flex: 1; min-width: 0; overflow: hidden; background: #e4e4e4; }
.diagram { width: 942px; height: 596px; stroke: none; }
.page { fill: #fff; stroke: #b0b0b0; stroke-width: 1px; }
.flow { stroke: #333; stroke-width: 1px; }
.node-text { fill: #222; font-size: 12px; text-anchor: middle; }
.node-text.latin { font: 10px "DejaVu Sans Mono", monospace; }
.big-title { font-size: 25px; font-weight: 700; text-anchor: middle; fill: #1a1a1a; }
.dash { stroke: #007fff; stroke-width: 1px; stroke-dasharray: 4 4; stroke-linecap: butt; }
.handles { fill: #fff; stroke: #007fff; stroke-width: 1px; }
.v-track { flex: none; width: 13px; padding: 90px 2px 0 1px; border-left: 1px solid #ddd; }
.v-thumb { display: block; height: 344px; border-radius: 5px; background: #bebebe; }
.h-track { flex: none; height: 13px; padding: 2px 0 2px 233px; border-top: 1px solid #ddd; border-bottom: 1px solid #ddd; }
.h-thumb { display: block; width: 480px; height: 9px; border-radius: 5px; background: #bebebe; }
.palette { flex: none; height: 24px; display: flex; }
.fill { width: 45px; margin-right: 2px; }
.swatches { flex: 1; display: flex; gap: 1px; padding: 1px 1px 2px 0; }
.swatches button { flex: 1; }

.side { flex: none; width: 49px; border-left: 1px solid #ccc; overflow: hidden; }
.side button { width: 48px; height: 66px; }
.side .collapse { height: 47px; }
.side .on { height: 51px; background: #007fff; }
.side .gap { margin-top: 6px; }

.status { flex: none; height: 50px; display: flex; justify-content: space-between; border-top: 1px solid #d8d8d8; color: #000; }
.pages, .zoom { display: flex; align-items: center; }
.view { width: 86px; }
.page-select { width: 168px; height: 36px; padding: 0 3px 0 8px; justify-content: space-between; border-right: 1px solid #ccc; }
.page-tab { width: 117px; font-weight: 700; }
.zoom { padding-right: 37px; }
.shape-id { margin-right: 14px; white-space: nowrap; }
.zoom input { appearance: none; width: 121px; height: 18px; outline: none; }
.zoom input::-webkit-slider-runnable-track { height: 6px; border-radius: 3px; background: linear-gradient(90deg, #c0c0c0 15%, #e0e0e0 15%); }
.zoom input::-webkit-slider-thumb { appearance: none; width: 18px; height: 18px; margin-top: -6px; border: 3px solid #bcbcbc; border-radius: 50%; background: #fff; }
.percent { width: 72px; padding-left: 12px; gap: 12px; justify-content: flex-start; margin-right: 18px; }
```
